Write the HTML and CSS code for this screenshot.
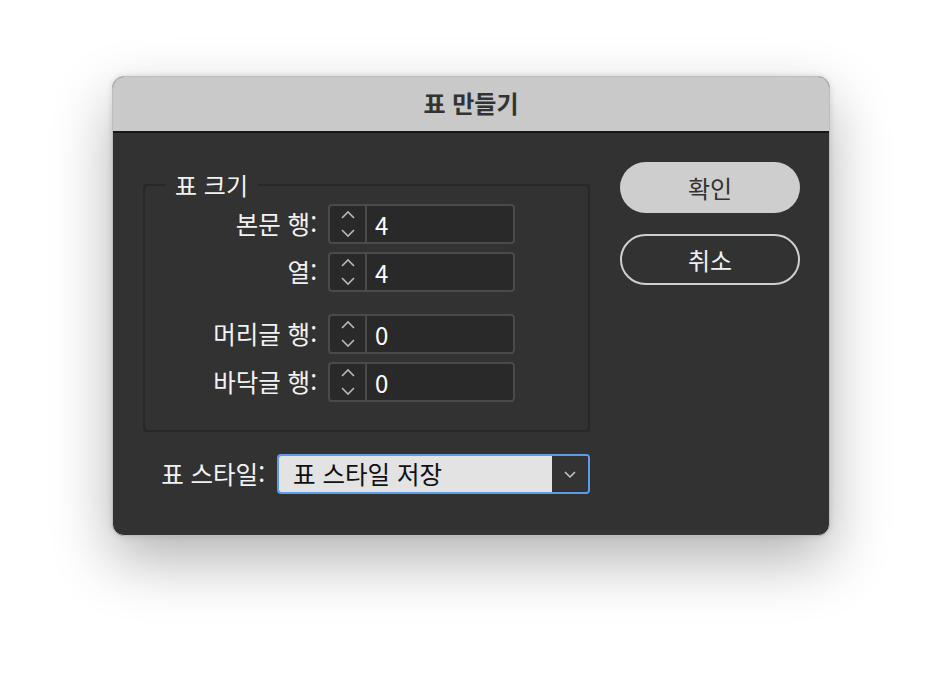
FILE: index.html
```html
<!DOCTYPE html>
<html lang="ko">
<head>
  <meta charset="UTF-8">
  <meta name="viewport" content="width=device-width, initial-scale=1.0">
  <title>표 만들기</title>
  <link rel="stylesheet" href="styles.css">
</head>
<body>
  <div class="window">
    <header class="titlebar">표 만들기</header>
    <div class="content">
      <div class="left">
        <!-- Table size group -->
        <fieldset class="group">
          <legend>표 크기</legend>
          <div class="row">
            <label class="label">본문 행:</label>
            <div class="spin">
              <span class="arrows">
                <svg width="16" height="32" viewBox="0 0 16 32"><path d="M2 10 L8 4 L14 10 M2 22 L8 28 L14 22" fill="none" stroke="#b8b8b8" stroke-width="1.6"/></svg>
              </span>
              <span class="value">4</span>
            </div>
          </div>
          <div class="row">
            <label class="label">열:</label>
            <div class="spin">
              <span class="arrows">
                <svg width="16" height="32" viewBox="0 0 16 32"><path d="M2 10 L8 4 L14 10 M2 22 L8 28 L14 22" fill="none" stroke="#b8b8b8" stroke-width="1.6"/></svg>
              </span>
              <span class="value">4</span>
            </div>
          </div>
          <div class="row row-gap">
            <label class="label">머리글 행:</label>
            <div class="spin">
              <span class="arrows">
                <svg width="16" height="32" viewBox="0 0 16 32"><path d="M2 10 L8 4 L14 10 M2 22 L8 28 L14 22" fill="none" stroke="#b8b8b8" stroke-width="1.6"/></svg>
              </span>
              <span class="value">0</span>
            </div>
          </div>
          <div class="row">
            <label class="label">바닥글 행:</label>
            <div class="spin">
              <span class="arrows">
                <svg width="16" height="32" viewBox="0 0 16 32"><path d="M2 10 L8 4 L14 10 M2 22 L8 28 L14 22" fill="none" stroke="#b8b8b8" stroke-width="1.6"/></svg>
              </span>
              <span class="value">0</span>
            </div>
          </div>
        </fieldset>

        <!-- Table style select -->
        <div class="style-row">
          <label class="style-label">표 스타일:</label>
          <div class="select">
            <span class="select-text">표 스타일 저장</span>
            <span class="select-arrow">
              <svg width="14" height="10" viewBox="0 0 14 10"><path d="M2 3 L7 8 L12 3" fill="none" stroke="#c8c8c8" stroke-width="1.5"/></svg>
            </span>
          </div>
        </div>
      </div>

      <div class="buttons">
        <button class="btn btn-primary">확인</button>
        <button class="btn btn-outline">취소</button>
      </div>
    </div>
  </div>
</body>
</html>
```

FILE: styles.css
```css
/* Page */
html {
  background: #ffffff;
}

body {
  margin: 0;
  min-height: 684px;
  box-sizing: border-box;
  padding: 76px 0 0 112px;
  background: #ffffff;
  font-family: "Noto Sans CJK KR", "Noto Sans", sans-serif;
}

.window {
  width: 718px;
  height: 460px;
  background: #323232;
  border-radius: 12px;
  overflow: hidden;
  box-sizing: border-box;
  border: 1px solid #bdbdbd;
  box-shadow: 0 24px 60px rgba(0, 0, 0, 0.3), 0 0 6px rgba(0, 0, 0, 0.12);
  display: flex;
  flex-direction: column;
}

.titlebar {
  height: 54px;
  background: #c8c9c8;
  border-bottom: 2px solid #161616;
  color: #333;
  font-size: 24px;
  font-weight: bold;
  line-height: 52px;
  text-align: center;
}

.content {
  display: flex;
  padding: 29px 29px 0 30px;
  gap: 30px;
}

.left {
  width: 447px;
}

/* Group box */
.group {
  margin: 10px 0 0 0;
  padding: 6px 0 28px 0;
  border: 2px solid #282828;
  border-radius: 4px;
}

.group legend {
  margin-left: 20px;
  padding: 0 10px;
  color: #f2f2f2;
  font-size: 24px;
  line-height: 26px;
}

.row {
  display: flex;
  align-items: center;
  margin-top: 8px;
}

.row:first-of-type {
  margin-top: 0;
}

.row-gap {
  margin-top: 22px;
}

.label {
  width: 172px;
  margin-right: 11px;
  text-align: right;
  color: #f2f2f2;
  font-size: 24.5px;
  line-height: 26px;
}

.spin {
  width: 187px;
  height: 40px;
  box-sizing: border-box;
  border: 2px solid #4a4a4a;
  border-radius: 4px;
  background: #292929;
  display: flex;
}

.arrows {
  width: 35px;
  border-right: 2px solid #4a4a4a;
  display: flex;
  align-items: center;
  justify-content: center;
}

.value {
  padding-left: 8px;
  color: #ffffff;
  font-size: 24px;
  line-height: 38px;
}

/* Style select */
.style-row {
  display: flex;
  align-items: center;
  margin-top: 22px;
}

.style-label {
  width: 122px;
  margin-right: 12px;
  text-align: right;
  color: #f2f2f2;
  font-size: 24.5px;
  line-height: 26px;
}

.select {
  width: 313px;
  height: 40px;
  box-sizing: border-box;
  border: 2px solid #5c9de8;
  border-radius: 4px;
  display: flex;
  overflow: hidden;
}

.select-text {
  flex: 1;
  background: #e3e3e3;
  color: #111;
  font-size: 24.5px;
  line-height: 36px;
  padding-left: 14px;
}

.select-arrow {
  width: 36px;
  background: #333333;
  display: flex;
  align-items: center;
  justify-content: center;
}

/* Buttons */
.buttons {
  display: flex;
  flex-direction: column;
  gap: 21px;
}

.btn {
  width: 180px;
  height: 51px;
  border-radius: 26px;
  font-family: inherit;
  font-size: 24px;
  padding: 0;
  cursor: pointer;
}

.btn-primary {
  background: #cecece;
  color: #333;
  border: none;
}

.btn-outline {
  background: transparent;
  color: #f2f2f2;
  border: 2px solid #cfcfcf;
}
```
